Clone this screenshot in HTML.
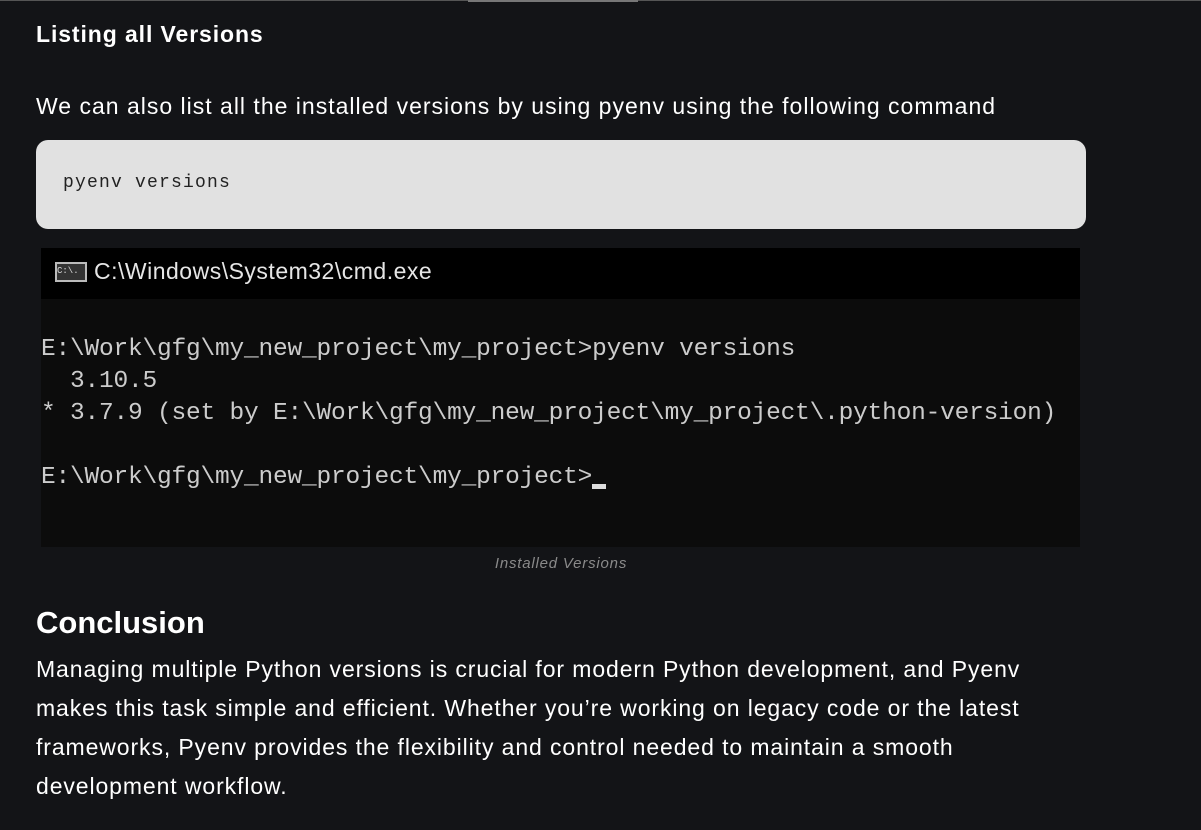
<!DOCTYPE html>
<html><head><meta charset="utf-8"><style>
*{margin:0;padding:0;box-sizing:border-box}
body{width:1201px;height:830px;background:#131417;color:#fff;font-family:"Liberation Sans",sans-serif;position:relative;overflow:hidden}
.top{position:absolute;top:0;left:0;width:1201px;height:1px;background:#555}
.top2{position:absolute;top:0;left:468px;width:170px;height:2px;background:#777}
.abs{position:absolute}
h3{position:absolute;left:36px;top:21px;font-size:23px;font-weight:bold;letter-spacing:0.9px}
p.a{left:36px;top:93px;font-size:23px;letter-spacing:1px}
.code{left:36px;top:140px;width:1050px;height:89px;background:#e1e1e1;border-radius:12px;color:#222;font-family:"Liberation Mono",monospace;font-size:18px;padding:33px 0 0 27px;letter-spacing:1.2px}
.tb{left:41px;top:248px;width:1039px;height:51px;background:#000;color:#e6e6e6;font-size:23px;padding:10px 0 0 53px;letter-spacing:0.5px}
.ico{position:absolute;left:14px;top:14px;width:32px;height:20px;border:2px solid #bbb;background:#333;font-size:9px;color:#ddd;line-height:14px;font-family:"Liberation Mono",monospace;letter-spacing:0}
.term{left:41px;top:301px;width:1039px;height:246px;background:#0c0c0c;color:#cccccc;font-family:"Liberation Mono",monospace;font-size:24.5px;line-height:32px;padding:33px 0 0 0;white-space:pre;letter-spacing:-0.2px}
.cur{display:inline-block;width:14px;height:5px;background:#ddd;vertical-align:-6px}
.cap{left:0;width:1122px;top:555px;text-align:center;font-size:15px;font-style:italic;color:#8a8a8a;letter-spacing:0.8px}
h2{position:absolute;left:36px;top:605px;font-size:31px;font-weight:bold}
p.b{left:36px;top:650px;width:1030px;font-size:23px;line-height:39px;letter-spacing:0.9px}
</style></head><body>
<div class="top"></div><div class="top2"></div>
<h3>Listing all Versions</h3>
<p class="abs a">We can also list all the installed versions by using pyenv using the following command</p>
<div class="abs code">pyenv versions</div>
<div class="abs tb"><span class="ico">C:\.</span>C:\Windows\System32\cmd.exe</div>
<div class="abs" style="left:41px;top:299px;width:1039px;height:2px;background:#0c0c0c"></div>
<div class="abs term">E:\Work\gfg\my_new_project\my_project&gt;pyenv versions
  3.10.5
* 3.7.9 (set by E:\Work\gfg\my_new_project\my_project\.python-version)

E:\Work\gfg\my_new_project\my_project&gt;<span class="cur"></span></div>
<div class="abs cap">Installed Versions</div>
<h2>Conclusion</h2>
<p class="abs b">Managing multiple Python versions is crucial for modern Python development, and Pyenv makes this task simple and efficient. Whether you’re working on legacy code or the latest frameworks, Pyenv provides the flexibility and control needed to maintain a smooth development workflow.</p>
</body></html>
